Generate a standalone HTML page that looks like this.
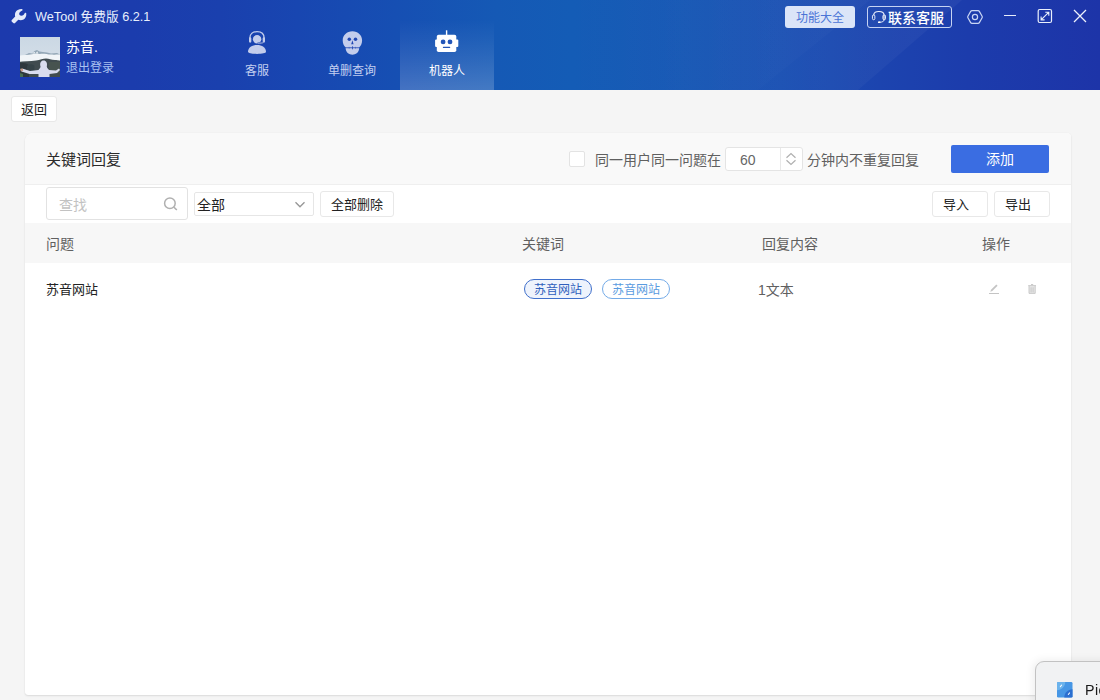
<!DOCTYPE html>
<html lang="zh-CN">
<head>
<meta charset="utf-8">
<title>WeTool 免费版 6.2.1</title>
<style>
*{box-sizing:border-box;margin:0;padding:0}
html,body{width:1100px;height:700px;overflow:hidden}
body{position:relative;background:#f5f5f5;font-family:"Liberation Sans","Noto Sans CJK SC",sans-serif;font-size:14px;color:#333}
.abs{position:absolute}
/* header */
#hdr{position:absolute;left:0;top:0;width:1100px;height:90px;overflow:hidden;
 background:linear-gradient(90deg,#1c3aad 0%,#1b3cad 12%,#1a40ae 20%,#1846b1 27%,#164fb3 36%,#1559b5 45%,#145cb6 52%,#1758b5 62%,#1a50b3 71%,#1c44af 80%,#1c3cac 88%,#1d34a8 100%)}
.t{position:absolute;white-space:nowrap;line-height:1}
#title{left:35px;top:10px;font-size:12.7px;line-height:14px;color:#e8eefc}
#uname{left:66px;top:39px;font-size:14px;line-height:16px;color:#fff}
#logout{left:66px;top:61px;font-size:12px;line-height:14px;color:#a9c1f1}
.tab{position:absolute;top:20px;width:94px;height:70px}
.tab .lbl{position:absolute;left:0;width:94px;top:44px;text-align:center;font-size:12px;line-height:14px;color:#c3cff0;white-space:nowrap}
.tab.on{background:linear-gradient(180deg,rgba(255,255,255,0) 0%,rgba(255,255,255,.05) 30%,rgba(255,255,255,.11) 60%,rgba(255,255,255,.2) 100%)}
.tab.on .lbl{color:#fff}
.tab svg{position:absolute}
#btn1{left:785px;top:6px;width:70px;height:22px;border-radius:3px;background:#dbe5f8;color:#4b74d6;font-size:12px;line-height:23px;padding-top:0.500px;text-align:center}
#btn2{left:867px;top:6px;width:85px;height:22px;border-radius:3px;border:1px solid #c6d3f3;color:#fff;font-size:14px;line-height:20px}
#btn2 span{position:absolute;left:20px;top:.6px;white-space:nowrap;font-weight:500}
/* body */
.btn{position:absolute;background:#fff;border:1px solid #e8e8e8;border-radius:3px;color:#222;font-size:13px;text-align:center;white-space:nowrap}
#back{left:11px;top:96px;width:46px;height:26px;line-height:26px}
#card{position:absolute;left:25px;top:133px;width:1046px;height:562px;background:#fff;border-radius:8px 4px 2px 3px;box-shadow:0 1px 2px rgba(0,0,0,.10),0 0 1px rgba(0,0,0,.08);overflow:hidden}
#chead{position:absolute;left:0;top:0;width:100%;height:52px;background:#f9f9f9;border-bottom:1px solid #efefef}
#thead{position:absolute;left:0;top:90px;width:100%;height:40px;background:#f7f7f7}
.th{top:103px;font-size:14px;line-height:16px;color:#606060}
.tag{position:absolute;top:146px;width:68px;height:20px;border:1px solid;border-radius:11px;font-size:12px;line-height:20.500px;text-align:center;white-space:nowrap}
#pic{position:absolute;left:1035px;top:661px;width:80px;height:50px;background:#f1f2f3;border:1px solid #c2c2c2;border-radius:9px 0 0 0;box-shadow:-2px -1px 8px rgba(0,0,0,.07)}
</style>
</head>
<body>
<div id="hdr">
  <svg class="abs" style="left:0;top:0" width="1100" height="90" viewBox="0 0 1100 90">
    <defs>
      <linearGradient id="sg1" x1="0" y1="0" x2="1" y2="0"><stop offset="0" stop-color="#fff" stop-opacity="0"/><stop offset="1" stop-color="#fff" stop-opacity=".04"/></linearGradient>
      <linearGradient id="sg2" x1="0" y1="0" x2="1" y2="0"><stop offset="0" stop-color="#fff" stop-opacity="0"/><stop offset="1" stop-color="#fff" stop-opacity=".02"/></linearGradient>
    </defs>
    <polygon points="560,0 962,0 858,90 560,90" fill="url(#sg1)"/>
    <polygon points="640,0 870,0 758,90 640,90" fill="url(#sg2)"/>
  </svg>
  <svg class="abs" style="left:11px;top:8px" width="16" height="16" viewBox="0 0 16 16"><path d="M10.800 .9 C8 .8 5.200 2.200 4.400 4.500 C3.800 6 3.900 7.500 4.200 8.600 L.8 12 C.3 12.600 .4 13.200 .9 13.700 L2.300 15.100 C2.800 15.600 3.500 15.600 4 15.100 L7.300 11.800 C9 12.400 11 12.300 12.600 11.400 C14.500 10.300 15.500 8 15.300 5.400 C15.200 4.800 14.200 4.600 13.800 5.100 C13.200 6.500 12 7.800 10.400 7.800 C8.800 7.800 8 6.600 8.200 5.500 C8.400 4 10 3 11.300 2.400 C11.900 2 11.600 1 10.800 .9Z" fill="#e4eafa"/></svg>
  <div class="t" id="title">WeTool 免费版 6.2.1</div>

  <!-- avatar -->
  <svg class="abs" style="left:20px;top:37px" width="40" height="40" viewBox="0 0 40 40">
    <defs>
      <linearGradient id="sky" x1="0" y1="0" x2="0" y2="1"><stop offset="0" stop-color="#cbd8e4"/><stop offset="1" stop-color="#d9e2ea"/></linearGradient>
      <filter id="bl" x="-10%" y="-10%" width="120%" height="120%"><feGaussianBlur stdDeviation=".55"/></filter>
      <clipPath id="avc"><rect width="40" height="40"/></clipPath>
    </defs>
    <g clip-path="url(#avc)">
    <rect width="40" height="40" fill="url(#sky)"/>
    <g filter="url(#bl)">
      <path d="M5 18 L9 16 L12 16.500 L14.500 14 L17 13 L19.500 14.500 L23 15 L27 15.500 L31 16.500 L37 16 L40 17.500 V22 H5Z" fill="#93a7b6"/>
      <path d="M-2 19 C3 17.500 8 18 12 17.200 C15 16.500 17 17.500 20 16.900 S27 17.200 31 17.600 S37 17.200 42 17.600 V26 H-2Z" fill="#f1f5f8"/>
      <path d="M12 16.500 L14.500 14.800 L15.500 16.500 L17.200 14.200 L18.500 16.800Z" fill="#e8eef3"/>
      <path d="M-2 25 C4 24 10 24.500 16 23.500 C20 22.800 23 21.500 26 21.500 S31 22.800 35 23 S39 23.500 42 24 V42 H-2Z" fill="#3f4c50"/>
      <path d="M-2 26 C3 25.500 7 26.500 9 28 V42 H-2Z" fill="#2f393d"/>
      <path d="M7 29 C9 26.500 13 26.500 14.500 29 V36 H7Z" fill="#364347"/>
      <path d="M29 25 H40 V36 H29Z" fill="#46534f"/>
      <path d="M0 36 L3 37 V42 H0Z" fill="#476e52"/>
      <path d="M.5 32 L3 31.800 L10 34 L18.500 33 C19.500 31.500 20.500 31 20.500 29.500 C19.500 26 21 23.500 23.600 23.500 S27.600 26 26.800 29.500 C26.800 31 28 31.500 29 33 L36 33.500 L39 31.500 L40 33 L37 36 L29.500 37 V42 H18.500 V37 L9.500 37 L1.500 34.500Z" fill="#d9dcee"/>
      <path d="M.3 31.800 L2.800 31.500 L3.200 34 L.8 34.300Z" fill="#c79a86"/>
    </g>
    </g>
  </svg>
  <div class="t" id="uname">苏音.</div>
  <div class="t" id="logout">退出登录</div>

  <!-- tabs -->
  <div class="tab" style="left:210px">
    <svg style="left:36px;top:10px" width="22" height="25" viewBox="0 0 22 25">
      <g fill="#c3cdec">
        <circle cx="11.100" cy="9.300" r="4.200"/>
        <path d="M2 21.800 C2 17.500 6 14.900 11 14.900 S20 17.500 20 21.800 C20 23.200 16 23.900 11 23.900 S2 23.200 2 21.800Z"/>
        <rect x="3" y="7.300" width="2.300" height="5.400" rx="1.100"/>
        <rect x="16.700" y="7.300" width="2.300" height="5.400" rx="1.100"/>
      </g>
      <path d="M3.900 9 V8 C3.900 3.800 7 1.600 11 1.600 S18.100 3.800 18.100 8 V9" fill="none" stroke="#c3cdec" stroke-width="1.300"/>
      <path d="M17.600 12.600 C16.500 13.300 14.500 13.500 11.600 13.300" fill="none" stroke="#2046b0" stroke-width="2.200"/>
      <path d="M17.600 12.400 C16.500 13.100 14.500 13.200 11.800 13.100" fill="none" stroke="#c3cdec" stroke-width=".9"/>
    </svg>
    <div class="lbl">客服</div>
  </div>
  <div class="tab" style="left:305px">
    <svg style="left:37px;top:10.600px" width="21" height="24" viewBox="0 0 21 24">
      <path d="M10.400 .3 C16 .3 20.100 4.300 20.100 9.500 C20.100 12.500 18.900 14.800 17.300 16.300 L17 18.500 C16.500 21.500 13.800 23.700 10.400 23.700 S4.300 21.500 3.800 18.500 L3.500 16.300 C1.900 14.800 .7 12.500 .7 9.500 C.7 4.300 4.800 .3 10.400 .3Z" fill="#c3cdec"/>
      <g fill="#2147b2">
        <circle cx="7.300" cy="8.300" r="1.750"/>
        <circle cx="13.500" cy="8.300" r="1.750"/>
        <path d="M10.400 9.300 L11.600 13.200 H9.200Z"/>
        <rect x="3" y="16.400" width="14.800" height=".8"/>
        <rect x="10" y="15.300" width=".8" height="3"/>
        <rect x="6.800" y="15.800" width=".6" height="2" opacity=".6"/>
        <rect x="13.400" y="15.800" width=".6" height="2" opacity=".6"/>
      </g>
    </svg>
    <div class="lbl">单删查询</div>
  </div>
  <div class="tab on" style="left:400px">
    <svg style="left:35px;top:10px" width="24" height="23" viewBox="0 0 24 23">
      <g fill="#fff">
        <rect x="10.900" y=".3" width="1.400" height="6"/>
        <rect x="1.800" y="4.800" width="19.500" height="17.200" rx="1.800"/>
        <rect x=".1" y="9.600" width="3" height="7.400" rx="1"/>
        <rect x="20.300" y="9.600" width="3" height="7.400" rx="1"/>
      </g>
      <g fill="#2456b8">
        <circle cx="8.100" cy="11.900" r="2.400"/>
        <circle cx="15" cy="11.900" r="2.400"/>
        <rect x="7.900" y="16.700" width="7.300" height="1.400" rx=".5"/>
      </g>
    </svg>
    <div class="lbl">机器人</div>
  </div>

  <!-- right controls -->
  <div class="abs" id="btn1">功能大全</div>
  <div class="abs" id="btn2">
    <svg class="abs" style="left:3px;top:3px" width="16" height="15" viewBox="0 0 16 15"><path d="M2.700 5.200 C2.700 2.500 5 1.500 7.900 1.500 C10.800 1.500 13.100 2.500 13.100 5.200" fill="none" stroke="#eef2fc" stroke-width="1.100"/><rect x="1.450" y="5" width="2.400" height="4.700" rx="1.100" fill="none" stroke="#eef2fc" stroke-width=".95"/><rect x="11.900" y="5" width="2.600" height="4.700" rx="1.100" fill="#fff" fill-opacity=".55" stroke="#eef2fc" stroke-width=".9"/><path d="M13.300 9.600 C13 11.400 11 12.200 9 12.200" fill="none" stroke="#eef2fc" stroke-width="1"/><ellipse cx="8.200" cy="12.200" rx="1.300" ry=".9" fill="#fff"/></svg>
    <span>联系客服</span>
  </div>
  <svg class="abs" style="left:965px;top:8px" width="20" height="18" viewBox="0 0 20 18"><path d="M7 2.600 H13 Q13.900 2.600 14.350 3.380 L17.100 8.200 Q17.550 9 17.100 9.800 L14.350 14.620 Q13.900 15.400 13 15.400 H7 Q6.100 15.400 5.650 14.620 L2.900 9.800 Q2.450 9 2.900 8.200 L5.650 3.380 Q6.100 2.600 7 2.600Z" fill="none" stroke="#c9d5f4" stroke-width="1.200"/><circle cx="10" cy="9" r="2.600" fill="none" stroke="#c9d5f4" stroke-width="1.200"/></svg>
  <div class="abs" style="left:1004px;top:15px;width:12px;height:1.300px;background:#e6ecfb"></div>
  <svg class="abs" style="left:1037px;top:8px" width="16" height="16" viewBox="0 0 16 16"><rect x="1.200" y="1.500" width="13.300" height="13" rx="1.500" fill="none" stroke="#eaf0fc" stroke-width="1.200"/><path d="M4.300 11.700 L11.600 4.400 M8.300 4.200 H11.800 V7.700 M4.100 8.400 V11.900 H7.600" fill="none" stroke="#eaf0fc" stroke-width="1.100"/></svg>
  <svg class="abs" style="left:1073px;top:9px" width="14" height="14" viewBox="0 0 14 14"><path d="M1 1 L13 13 M13 1 L1 13" stroke="#eef2fc" stroke-width="1.300" fill="none"/></svg>
</div>

<div class="btn" id="back">返回</div>

<div id="card">
  <div id="chead"></div>
  <div class="t" style="left:21px;top:18px;font-size:15px;line-height:17px;color:#2b2b2b">关键词回复</div>
  <div class="abs" style="left:544px;top:18px;width:16px;height:16px;background:#fff;border:1px solid #e3e3e3;border-radius:2px"></div>
  <div class="t" style="left:570px;top:18.700px;font-size:14px;line-height:16px;color:#606060">同一用户同一问题在</div>
  <div class="abs" style="left:700px;top:14px;width:78px;height:24px;background:#fff;border:1px solid #e4e4e4;border-radius:3px">
    <div class="t" style="left:14px;top:3.500px;font-size:14px;line-height:16px;color:#666">60</div>
    <div class="abs" style="left:54px;top:0;width:1px;height:22px;background:#e8e8e8"></div>
    <svg class="abs" style="left:59px;top:4px" width="12" height="14" viewBox="0 0 12 14"><path d="M1.500 5.800 L6 1.500 L10.500 5.800 M1.500 8.200 L6 12.500 L10.500 8.200" fill="none" stroke="#b0b0b0" stroke-width="1.250"/></svg>
  </div>
  <div class="t" style="left:782px;top:18.700px;font-size:14px;line-height:16px;color:#606060">分钟内不重复回复</div>
  <div class="abs" style="left:926px;top:12px;width:98px;height:28px;background:#3a6de2;border-radius:2px;color:#fff;font-size:14px;line-height:29px;text-align:center">添加</div>

  <!-- toolbar -->
  <div class="abs" style="left:21px;top:54px;width:142px;height:33px;background:#fff;border:1px solid #e2e2e2;border-radius:3px">
    <div class="t" style="left:12px;top:9px;font-size:14px;line-height:16px;color:#c2c2c2">查找</div>
    <svg class="abs" style="left:116px;top:8px" width="16" height="16" viewBox="0 0 16 16"><circle cx="6.900" cy="7.200" r="5.300" fill="none" stroke="#b0b0b0" stroke-width="1.500"/><path d="M11 11.200 L13.800 14" stroke="#b0b0b0" stroke-width="1.600" fill="none"/></svg>
  </div>
  <div class="abs" style="left:169px;top:59px;width:120px;height:24px;background:#fff;border:1px solid #e6e6e6;border-radius:2px">
    <div class="t" style="left:2px;top:4px;font-size:14px;line-height:16px;color:#222">全部</div>
    <svg class="abs" style="left:99px;top:8px" width="12" height="8" viewBox="0 0 12 8"><path d="M1.500 1.300 L6 5.800 L10.500 1.300" fill="none" stroke="#999" stroke-width="1.400"/></svg>
  </div>
  <div class="btn" style="left:295px;top:58px;width:74px;height:26px;line-height:26px">全部删除</div>
  <div class="btn" style="left:907px;top:58px;width:56px;height:26px;line-height:26px;padding-right:8px">导入</div>
  <div class="btn" style="left:969px;top:58px;width:56px;height:26px;line-height:26px;padding-right:8px">导出</div>

  <!-- table -->
  <div id="thead"></div>
  <div class="t th" style="left:21px">问题</div>
  <div class="t th" style="left:497px">关键词</div>
  <div class="t th" style="left:737px">回复内容</div>
  <div class="t th" style="left:957px">操作</div>

  <div class="t" style="left:21px;top:149px;font-size:13px;line-height:15px;color:#222">苏音网站</div>
  <div class="tag" style="left:499px;border-color:#3f6fcb;color:#2f5fbd;background:#eef3fc">苏音网站</div>
  <div class="tag" style="left:577px;border-color:#74abe8;color:#5a9be0;background:#fff">苏音网站</div>
  <div class="t" style="left:733px;top:149px;font-size:14px;line-height:16px;color:#606060">1文本</div>
  <svg class="abs" style="left:963px;top:150px" width="12" height="12" viewBox="0 0 12 12"><path d="M2.300 8.800 L3 6.800 L8.300 1.500 L9.600 2.800 L4.300 8.100Z" fill="#c4c4c4"/><rect x="1" y="10" width="10" height="1" fill="#c4c4c4"/></svg>
  <svg class="abs" style="left:1002px;top:150px" width="10" height="12" viewBox="0 0 10 12"><rect x="2" y="3" width="6.200" height="7.300" fill="#e6e6e6"/><path d="M1.200 2.600 H9 M4 1.500 H6.200 M2 3 V10.400 H8.200 V3 M4.100 4.300 V9.300 M6.100 4.300 V9.300" fill="none" stroke="#c4c4c4" stroke-width=".9"/></svg>
</div>

<div id="pic">
  <svg class="abs" style="left:21px;top:20px" width="15.500" height="15.500" viewBox="0 0 17 17"><rect width="17" height="17" rx="1.500" fill="#4797e5"/><path d="M0 1.500 Q0 0 1.500 0 H9 C9 5 5 9 0 9Z" fill="#6bb3ec"/><path d="M8 17 C8 12 12 8 17 8 V15.500 Q17 17 15.500 17Z" fill="#2b6fd0"/><path d="M3.600 5.200 L5 3.400" stroke="#fff" stroke-width="1.100" stroke-linecap="round"/><path d="M12.400 13.700 L13.800 12" stroke="#fff" stroke-width="1.100" stroke-linecap="round"/></svg>
  <div class="t" style="left:49px;top:19px;font-size:15.500px;letter-spacing:.4px;line-height:18px;color:#1a1a1a;transform:scaleX(.92);transform-origin:0 0">Pic</div>
</div>
</body>
</html>
